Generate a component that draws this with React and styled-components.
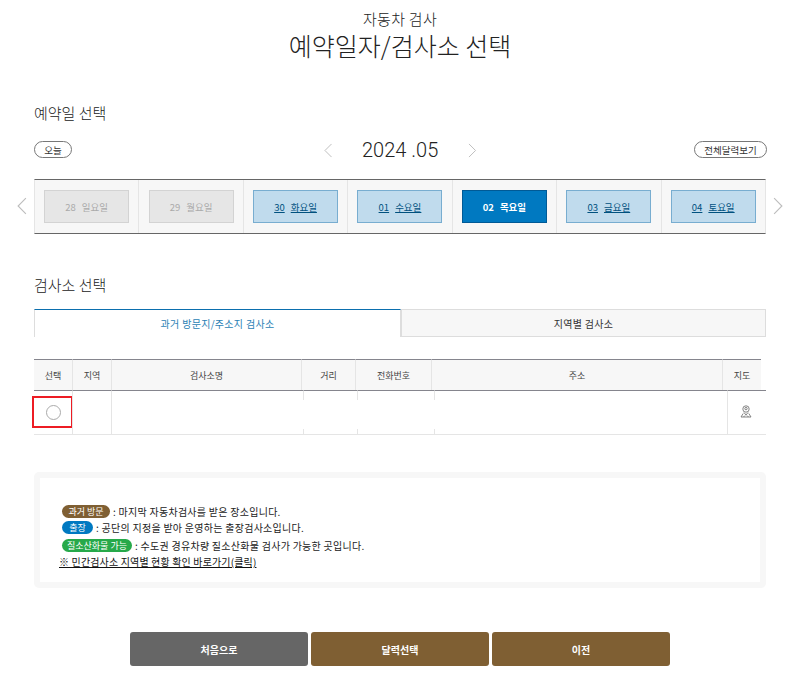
import React from 'react'
import styled, { createGlobalStyle } from 'styled-components'

const GlobalStyle = createGlobalStyle`
  html, body {
    margin: 0;
    padding: 0;
    background: #fff;
  }
  body {
    font-family: "Noto Sans CJK KR", "Noto Sans", sans-serif;
    color: #222;
  }
  * {
    box-sizing: border-box;
  }
`

const Page = styled.div`
  width: 791px;
  height: 685px;
  overflow: hidden;
  padding: 10px 25px 0 34px;
`

const Head = styled.header`
  height: 60px;
  display: flex;
  flex-direction: column;
  align-items: center;
`

const SubTitle = styled.div`
  font-size: 15px;
  line-height: 18px;
  font-weight: 300;
  letter-spacing: 0.3px;
`

const Title = styled.h1`
  margin: 0;
  margin-top: -1px;
  font-size: 25px;
  line-height: 36px;
  font-weight: 300;
`

const SectionTitle = styled.h2`
  margin: 0;
  font-size: 15px;
  line-height: 22px;
  font-weight: 300;
  height: ${(p) => p.$h}px;
  padding-top: ${(p) => p.$top}px;
  box-sizing: content-box;
`

const DateBar = styled.div`
  height: 40px;
  display: grid;
  grid-template-columns: 1fr auto 1fr;
  align-items: start;
  padding-top: 2px;
`

const Pill = styled.button`
  height: 17px;
  width: ${(p) => p.$w}px;
  justify-self: ${(p) => (p.$end ? 'end' : 'start')};
  margin-right: ${(p) => (p.$end ? '-1px' : '0')};
  border: 1px solid #777;
  border-radius: 9px;
  background: #fff;
  padding: 0;
  font: inherit;
  font-size: 9.5px;
  line-height: 14px;
  color: #333;
`

const Month = styled.div`
  display: flex;
  align-items: center;
  gap: 30px;
  height: 18px;
  color: #bbb;
`

const MonthText = styled.span`
  font-family: Roboto, sans-serif;
  font-size: 20px;
  line-height: 18px;
  font-weight: 300;
  color: #222;
  width: 76px;
  white-space: nowrap;
  text-align: center;
`

const WeekWrap = styled.div`
  position: relative;
  display: flex;
  width: 732px;
  height: 55px;
  border-top: 1px solid #666;
  border-bottom: 1px solid #666;
  background: #f7f7f7;
  border-left: 1px solid #e5e5e5;
  border-right: 1px solid #e5e5e5;
`

const Arrow = styled.span`
  position: absolute;
  top: 17px;
  ${(p) => (p.$right ? 'right: -18px;' : 'left: -18px;')}
  display: flex;
  color: #bdbdbd;
`

const DayCell = styled.div`
  flex: 1;
  display: flex;
  align-items: center;
  justify-content: center;
  border-left: ${(p) => (p.$first ? 'none' : '1px solid #e5e5e5')};
`

const DayButton = styled.div`
  width: 85px;
  height: 33px;
  display: flex;
  align-items: center;
  justify-content: center;
  gap: 6px;
  font-size: 9.5px;
  border: 1px solid ${(p) => ({ off: '#d3d3d3', open: '#78add0', on: '#005a96' }[p.$state])};
  background: ${(p) => ({ off: '#e6e6e6', open: '#c0dbed', on: '#0079c1' }[p.$state])};
  color: ${(p) => ({ off: '#aaa', open: '#00517f', on: '#fff' }[p.$state])};
  text-decoration: ${(p) => (p.$state === 'open' ? 'underline' : 'none')};
  font-weight: ${(p) => (p.$state === 'on' ? 700 : 400)};
`

const Tabs = styled.div`
  display: flex;
  width: 732px;
  height: 28px;
  margin-bottom: 22px;
`

const Tab = styled.div`
  flex: ${(p) => (p.$active ? '0 0 367px' : '1')};
  display: flex;
  align-items: center;
  justify-content: center;
  font-size: 10px;
  letter-spacing: 0.3px;
  background: ${(p) => (p.$active ? '#fff' : '#f7f7f7')};
  color: ${(p) => (p.$active ? '#2b7fb5' : '#333')};
  border: 1px solid #ddd;
  border-top: 1px solid ${(p) => (p.$active ? '#0b6fae' : '#ddd')};
  border-bottom: ${(p) => (p.$active ? 'none' : '1px solid #ddd')};
`

const Table = styled.table`
  border-collapse: separate;
  border-spacing: 0;
  table-layout: fixed;
  width: ${(p) => p.$w}px;
`

const Th = styled.th`
  width: ${(p) => p.$w}px;
  height: 31px;
  padding: 0;
  background: #f7f7f7;
  border-top: 1px solid #85858d;
  border-left: ${(p) => (p.$first ? 'none' : '1px solid #e5e5e5')};
  font-size: 9px;
  font-weight: 400;
  color: #444;
`

const Td = styled.td`
  position: relative;
  width: ${(p) => p.$w}px;
  height: 45px;
  padding: 0;
  background: #fff;
  text-align: center;
  vertical-align: middle;
  border-top: 1px solid #85858d;
  border-bottom: 1px solid #e5e5e5;
  border-left: ${(p) => (p.$first ? 'none' : '1px solid #e5e5e5')};
`

const Blank = styled.span`
  position: absolute;
  left: -1px;
  top: 9px;
  width: 2px;
  height: 29px;
  background: #fff;
`

const Radio = styled.span`
  display: block;
  width: 15px;
  height: 15px;
  margin: -1px auto 0;
  border: 1px solid #aaa;
  border-radius: 50%;
`

const Marker = styled.span`
  position: absolute;
  left: -2px;
  top: 5px;
  width: 41px;
  height: 32px;
  border: 2px solid #ed1c24;
  pointer-events: none;
`

const MapPin = styled.svg`
  display: block;
  margin: -2px auto 0;
  position: relative;
  left: -1px;
`

const Notice = styled.div`
  width: 732px;
  height: 116px;
  margin-top: 37px;
  border: 6px solid #f7f7f7;
  border-radius: 5px;
  padding: 25px 0 0 19px;
  font-size: 10px;
  color: #222;
`

const NoticeRow = styled.div`
  display: flex;
  align-items: center;
  height: ${(p) => p.$h}px;
  padding-left: 3px;
  gap: 3px;
  white-space: nowrap;
  letter-spacing: 0.27px;
`

const Badge = styled.span`
  display: inline-flex;
  align-items: center;
  justify-content: center;
  width: ${(p) => p.$w}px;
  height: 13px;
  border-radius: 7px;
  background: ${(p) => p.$bg};
  color: #fff;
  font-size: 9px;
  letter-spacing: 0;
`

const NoticeLink = styled.a`
  display: block;
  line-height: 15px;
  color: #111;
  letter-spacing: 0.15px;
  text-decoration: underline;
  white-space: nowrap;
`

const Actions = styled.div`
  display: flex;
  justify-content: center;
  gap: 3px;
  margin-top: 44px;
`

const ActionButton = styled.button`
  width: 178px;
  height: 34px;
  border: 0;
  border-radius: 3px;
  padding: 0;
  background: ${(p) => (p.$gray ? '#666' : '#7f5f33')};
  color: #fff;
  font: inherit;
  font-size: 10px;
  font-weight: 700;
`

const Chevron = ({ left, size = 16 }) => (
  <svg width={size / 2 + 1} height={size} viewBox="0 0 9 16" fill="none" stroke="currentColor" strokeWidth="1">
    <path d={left ? 'M8 1 1 8l7 7' : 'M1 1l7 7-7 7'} />
  </svg>
)

const days = [
  ['28', '일요일', 'off'],
  ['29', '월요일', 'off'],
  ['30', '화요일', 'open'],
  ['01', '수요일', 'open'],
  ['02', '목요일', 'on'],
  ['03', '금요일', 'open'],
  ['04', '토요일', 'open'],
]

const headCols = [
  ['선택', 38],
  ['지역', 39],
  ['검사소명', 190],
  ['거리', 54],
  ['전화번호', 76],
  ['주소', 291],
  ['지도', 39],
]

const bodyCols = [38, 39, 192, 54, 77, 293, 39]

function App() {
  return (
    <Page>
      <GlobalStyle />
      <Head>
        <SubTitle>자동차 검사</SubTitle>
        <Title>예약일자/검사소 선택</Title>
      </Head>

      <SectionTitle $top={32} $h={37}>예약일 선택</SectionTitle>
      <DateBar>
        <Pill $w={38}>오늘</Pill>
        <Month>
          <Chevron left size={15} />
          <MonthText>2024 .05</MonthText>
          <Chevron size={15} />
        </Month>
        <Pill $w={73} $end>전체달력보기</Pill>
      </DateBar>

      <WeekWrap>
        <Arrow><Chevron left size={18} /></Arrow>
        {days.map(([num, name, state], i) => (
          <DayCell key={num} $first={i === 0}>
            <DayButton $state={state}>
              <span>{num}</span>
              <span>{name}</span>
            </DayButton>
          </DayCell>
        ))}
        <Arrow $right><Chevron size={18} /></Arrow>
      </WeekWrap>

      <SectionTitle $top={40} $h={35}>검사소 선택</SectionTitle>
      <Tabs>
        <Tab $active>과거 방문지/주소지 검사소</Tab>
        <Tab>지역별 검사소</Tab>
      </Tabs>

      <Table $w={727}>
        <thead>
          <tr>
            {headCols.map(([label, w], i) => (
              <Th key={label} $w={w} $first={i === 0}>{label}</Th>
            ))}
          </tr>
        </thead>
      </Table>
      <Table $w={732}>
        <tbody>
          <tr>
            {bodyCols.map((w, i) => (
              <Td key={i} $w={w} $first={i === 0}>
                {i === 0 && <Radio />}
                {i === 0 && <Marker />}
                {(i === 3 || i === 4 || i === 5) && <Blank />}
                {i === 6 && (
                  <MapPin width="12" height="13" viewBox="0 0 12 13" fill="none" stroke="#777" strokeWidth="0.9">
                    <circle cx="6" cy="4" r="3.2" />
                    <circle cx="6" cy="3.6" r="1.2" />
                    <path d="M4 7.5 6 10l2-2.5M3.2 8.5 1 12h10L8.800 8.500M3.500 12 5 10.500M8.500 12 7 10.500" />
                  </MapPin>
                )}
              </Td>
            ))}
          </tr>
        </tbody>
      </Table>

      <Notice>
        <NoticeRow $h={16}>
          <Badge $w={48} $bg="#7f5f33">과거 방문</Badge>
          <span>: 마지막 자동차검사를 받은 장소입니다.</span>
        </NoticeRow>
        <NoticeRow $h={17}>
          <Badge $w={31} $bg="#0079c1">출장</Badge>
          <span>: 공단의 지정을 받아 운영하는 출장검사소입니다.</span>
        </NoticeRow>
        <NoticeRow $h={18}>
          <Badge $w={70} $bg="#27a94a">질소산화물 가능</Badge>
          <span>: 수도권 경유차량 질소산화물 검사가 가능한 곳입니다.</span>
        </NoticeRow>
        <NoticeLink>※ 민간검사소 지역별 현황 확인 바로가기(클릭)</NoticeLink>
      </Notice>

      <Actions>
        <ActionButton $gray>처음으로</ActionButton>
        <ActionButton>달력선택</ActionButton>
        <ActionButton>이전</ActionButton>
      </Actions>
    </Page>
  )
}

export default App
